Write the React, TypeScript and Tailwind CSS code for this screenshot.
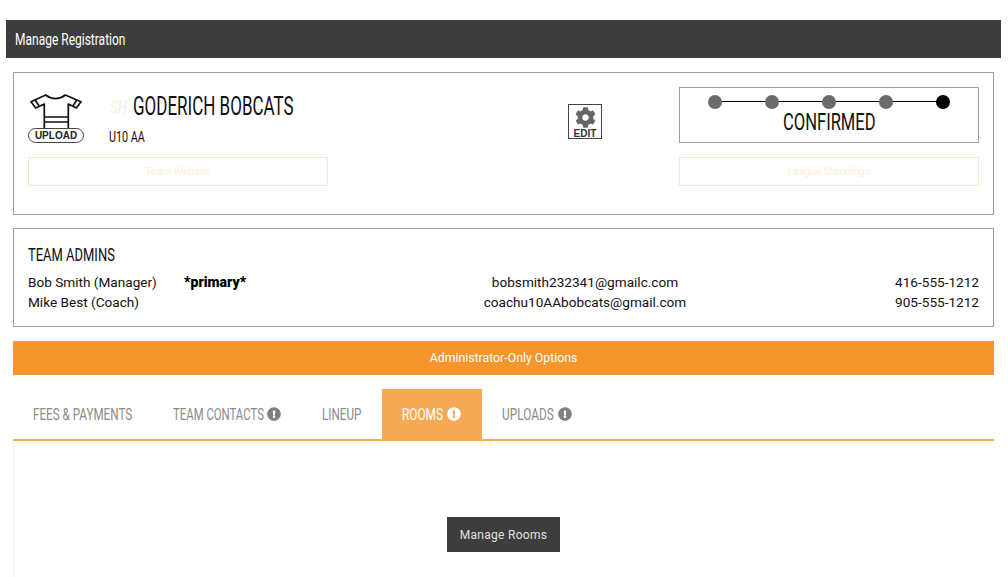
import React from "react";
import { FaCog, FaExclamationCircle } from "react-icons/fa";

// no condensed face is installed, so headings are Roboto squeezed sideways
const narrow = "inline-block origin-left whitespace-nowrap";

const tabs = [
  { label: "FEES & PAYMENTS", tab: "w-[140px]", text: "w-[99px]", squeeze: "scale-x-[0.73]", alert: false, active: false },
  { label: "TEAM CONTACTS", tab: "w-[149px]", text: "w-[90px]", squeeze: "scale-x-[0.71]", alert: true, active: false },
  { label: "LINEUP", tab: "w-[80px]", text: "w-[39px]", squeeze: "scale-x-[0.73]", alert: false, active: false },
  { label: "ROOMS", tab: "w-[100px]", text: "w-[41px]", squeeze: "scale-x-[0.74]", alert: true, active: true },
  { label: "UPLOADS", tab: "w-[110px]", text: "w-[52px]", squeeze: "scale-x-[0.74]", alert: true, active: false },
];

const admins = [
  { name: "Bob Smith (Manager)", primary: true, email: "bobsmith232341@gmailc.com", phone: "416-555-1212" },
  { name: "Mike Best (Coach)", primary: false, email: "coachu10AAbobcats@gmail.com", phone: "905-555-1212" },
];

const steps = ["#6b6b6b", "#6b6b6b", "#6b6b6b", "#6b6b6b", "#000000"];

const Shirt = () => (
  <svg width="52" height="36" viewBox="0 0 52 36" fill="none" stroke="#111" strokeWidth="1.7" className="block">
    <path d="M15.7 1 L1 7.7 L5.7 14 L14.3 10 L14.3 36 L38.3 36 L38.3 10 L46.3 14 L51 7.7 L35.3 1 C32 3.6 29 4.6 25.5 4.6 C22 4.6 19 3.6 15.7 1 Z" strokeLinejoin="round" />
    <path d="M14.3 23 L38.3 23 M14.3 28 L38.3 28" />
    <path d="M5 5.8 L9 11.8 M47 5.8 L43 11.8" />
  </svg>
);

const App = () => {
  return (
    <div className="w-[1008px] h-[577px] overflow-hidden bg-white pt-5 pl-[6px] font-['Roboto',sans-serif]">
      <div className="w-[995px] h-[38px] bg-[#3d3d3d] text-white flex items-center pl-[9px] pt-px text-[16px]">
        <span className={`${narrow} scale-x-[0.75]`}>Manage Registration</span>
      </div>

      <div className="ml-[7px] w-[981px]">
        {/* team card */}
        <div className="mt-[14px] h-[143px] border border-[#9e9e9e] pt-[14px] px-[14px] flex">
          <div className="w-[300px]">
            <div className="h-[56px] pt-[7px] flex">
              <div className="w-[56px] flex flex-col items-center">
                <Shirt />
                <div className="relative -mt-[2px] w-[56px] h-[15px] bg-white border border-[#444] rounded-full text-[10px] leading-[13px] font-bold text-center text-[#222] font-['Liberation_Sans',sans-serif]">
                  UPLOAD
                </div>
              </div>
              <div className="ml-[25px]">
                <div className="flex items-center h-[26px]">
                  <span className="w-[24px] pl-px flex italic font-bold text-[20px] scale-x-[0.68] origin-left">
                    <span className="text-[#fcf5e6]">S</span>
                    <span className="text-[#f5f4f0]">H</span>
                  </span>
                  <span className={`${narrow} scale-x-[0.68] text-[25px] text-[#111]`}>GODERICH BOBCATS</span>
                </div>
                <div className="mt-[7px] text-[14px] text-[#111]">
                  <span className={`${narrow} scale-x-[0.77]`}>U10 AA</span>
                </div>
              </div>
            </div>
            <div className="mt-[14px] h-[29px] border border-[#fbe6cd] flex items-center justify-center text-[10.3px] text-[#fdeedd]">
              Team Website
            </div>
          </div>

          <div className="ml-[240px] mt-[17px] w-[34px] h-[35px] border border-[#444] flex flex-col items-center pt-[2px]">
            <FaCog className="text-[#666] w-[21px] h-[21px]" />
            <span className="mt-px text-[10px] leading-[9px] font-bold text-[#333] font-['Liberation_Sans',sans-serif]">EDIT</span>
          </div>

          <div className="ml-[77px] w-[300px]">
            <div className="h-[56px] border border-[#9e9e9e] flex flex-col items-center">
              <div className="mt-[7px] w-[242px] flex justify-between items-center relative">
                <div className="absolute left-[7px] right-[7px] top-[6px] h-px bg-black" />
                {steps.map((c, i) => (
                  <div key={i} className={`relative w-[14px] h-[14px] rounded-full ${c === "#000000" ? "bg-black" : "bg-[#6b6b6b]"}`} />
                ))}
              </div>
              <div className="w-[92px] text-[24px] leading-[26px] text-[#111]">
                <span className={`${narrow} scale-x-[0.69]`}>CONFIRMED</span>
              </div>
            </div>
            <div className="mt-[14px] h-[29px] border border-[#fbe6cd] flex items-center justify-center text-[10.3px] text-[#fdeedd]">
              League Standings
            </div>
          </div>
        </div>

        {/* admins */}
        <div className="mt-[13px] h-[99px] border border-[#9e9e9e] pt-[14px] px-[14px]">
          <div className="text-[18px] leading-[24px] text-[#111]">
            <span className={`${narrow} scale-x-[0.72]`}>TEAM ADMINS</span>
          </div>
          <div className="mt-[5px]">
            {admins.map((a) => (
              <div key={a.email} className="grid grid-cols-[156px_201px_400px_1fr] text-[13.6px] leading-[20px] text-[#111]">
                <span>{a.name}</span>
                <span className="font-black text-[14px] text-black">{a.primary ? "*primary*" : ""}</span>
                <span className="text-center">{a.email}</span>
                <span className="text-right">{a.phone}</span>
              </div>
            ))}
          </div>
        </div>

        <div className="mt-[14px] h-[34px] bg-[#f5962c] text-white text-[12.3px] flex items-center justify-center">
          Administrator-Only Options
        </div>

        {/* tabs */}
        <div className="mt-[14px] h-[52px] border-b-2 border-[#f6aa55] flex">
          {tabs.map((t) => (
            <div
              key={t.label}
              className={`${t.tab} h-[50px] pl-5 flex items-center gap-[4px] text-[16px] ${t.active ? "bg-[#f6aa55] text-white" : "text-[#8a8a8a]"}`}
            >
              <span className={`${t.text} pt-[2px]`}>
                <span className={`${narrow} ${t.squeeze}`}>{t.label}</span>
              </span>
              {t.alert && <FaExclamationCircle className={`w-[14px] h-[14px] ${t.active ? "text-white" : "text-[#808080]"}`} />}
            </div>
          ))}
        </div>

        <div className="h-[140px] border-l border-[#fdf3e0] pr-px flex justify-center items-start pt-[76px]">
          <button className="w-[113px] h-[35px] bg-[#3d3d3d] text-[#e0e0e0] text-[12px] tracking-[0.3px]">Manage Rooms</button>
        </div>
      </div>
    </div>
  );
};

export default App;
